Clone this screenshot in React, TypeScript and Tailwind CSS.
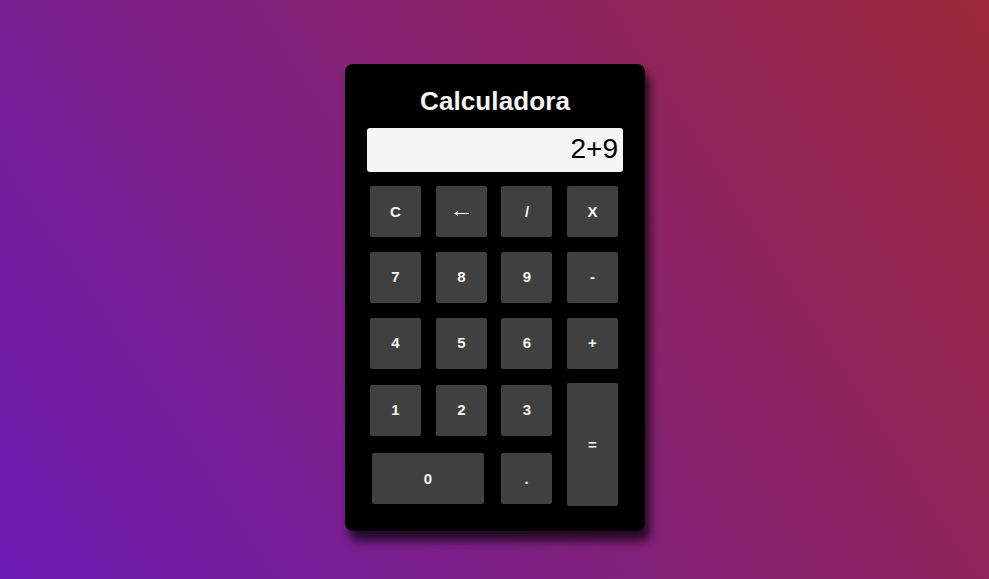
const key =
  "flex h-[51px] w-[51px] items-center justify-center rounded-[2px] bg-[#404040] pl-px text-[15px] leading-none font-bold text-[#f5f5f5]";

function Key({ label, className = "" }: { label: string; className?: string }) {
  return <button className={`${key} ${className}`}>{label}</button>;
}

function Arrow() {
  return (
    <button className={key} aria-label="Borrar">
      <svg width="15" height="5" viewBox="0 0 15 5" fill="none" className="mt-[3px]">
        <path d="M1 2.5H15M4 0.5L1 2.5L4 4.5" stroke="#f5f5f5" strokeWidth="1.2" />
      </svg>
    </button>
  );
}

export default function App() {
  return (
    <main className="flex h-screen items-start justify-center overflow-hidden bg-[linear-gradient(57deg,#6a1bb3,#9e293a)] pt-16 font-['Liberation_Sans',Arial,sans-serif]">
      <section className="h-[467px] w-[300px] rounded-lg bg-black px-[22px] pt-[21px] shadow-[5px_10px_10px_rgba(0,0,0,0.7)]">
        <h1 className="pl-px text-center text-[26px] leading-[32px] font-bold tracking-[0.1px] text-[#f5f5f5]">
          Calculadora
        </h1>
        <div className="mt-[11px] h-[44px] rounded-[3px] bg-[#f5f5f5] pr-[4.5px] text-right text-[28px] leading-[42px] text-black">
          2+9
        </div>
        <div className="mt-[14px] ml-[3px] flex gap-[15px]">
          <div className="w-[182px]">
            <div className="grid grid-cols-[66px_65.5px_51px] gap-y-[15px]">
              <Key label="C" />
              <Arrow />
              <Key label="/" />
              <Key label="7" className="pb-[2px]" />
              <Key label="8" className="pb-[2px]" />
              <Key label="9" className="pb-[2px]" />
              <Key label="4" className="pb-[2px]" />
              <Key label="5" className="pb-[2px]" />
              <Key label="6" className="pb-[2px]" />
            </div>
            <div className="mt-4 grid grid-cols-[66px_65.5px_51px]">
              <Key label="1" className="pb-[2px]" />
              <Key label="2" className="pb-[2px]" />
              <Key label="3" className="pb-[2px]" />
            </div>
            <div className="mt-[17px] ml-[2px] flex gap-[17px]">
              <Key label="0" className="w-[112px]!" />
              <Key label="." />
            </div>
          </div>
          <div className="flex flex-col">
            <div className="flex flex-col gap-[15px]">
              <Key label="X" />
              <Key label="-" className="pb-[2px]" />
              <Key label="+" className="pb-[2px]" />
            </div>
            <Key label="=" className="mt-[14px] h-[123px]!" />
          </div>
        </div>
      </section>
    </main>
  );
}
